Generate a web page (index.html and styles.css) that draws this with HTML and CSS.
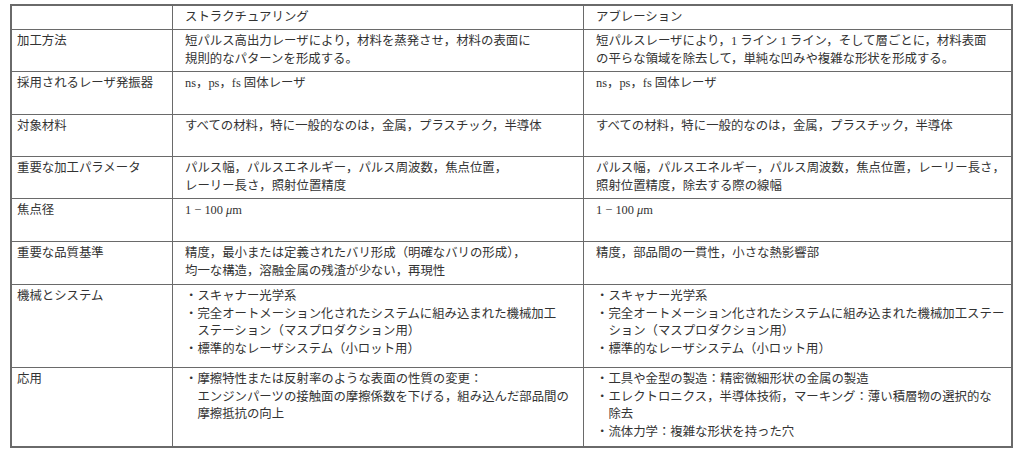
FILE: index.html
```html
<!DOCTYPE html>
<html lang="ja">
<head>
<meta charset="utf-8">
<title>ストラクチュアリングとアブレーション</title>
<link rel="stylesheet" href="styles.css">
</head>
<body>
<div class="table">
  <div class="cell label"></div>
  <div class="cell">ストラクチュアリング</div>
  <div class="cell">アブレーション</div>

  <div class="cell label">加工方法</div>
  <div class="cell">短パルス高出力レーザにより，材料を蒸発させ，材料の表面に<br>規則的なパターンを形成する。</div>
  <div class="cell">短パルスレーザにより，1 ライン 1 ライン，そして層ごとに，材料表面<br>の平らな領域を除去して，単純な凹みや複雑な形状を形成する。</div>

  <div class="cell label">採用されるレーザ発振器</div>
  <div class="cell">ns，ps，fs 固体レーザ</div>
  <div class="cell">ns，ps，fs 固体レーザ</div>

  <div class="cell label">対象材料</div>
  <div class="cell">すべての材料，特に一般的なのは，金属，プラスチック，半導体</div>
  <div class="cell">すべての材料，特に一般的なのは，金属，プラスチック，半導体</div>

  <div class="cell label">重要な加工パラメータ</div>
  <div class="cell">パルス幅，パルスエネルギー，パルス周波数，焦点位置，<br>レーリー長さ，照射位置精度</div>
  <div class="cell">パルス幅，パルスエネルギー，パルス周波数，焦点位置，レーリー長さ，<br>照射位置精度，除去する際の線幅</div>

  <div class="cell label">焦点径</div>
  <div class="cell">1 − 100 <i class="mu">μ</i>m</div>
  <div class="cell">1 − 100 <i class="mu">μ</i>m</div>

  <div class="cell label">重要な品質基準</div>
  <div class="cell">精度，最小または定義されたバリ形成（明確なバリの形成），<br>均一な構造，溶融金属の残渣が少ない，再現性</div>
  <div class="cell">精度，部品間の一貫性，小さな熱影響部</div>

  <div class="cell label">機械とシステム</div>
  <div class="cell">
    <ul class="bullets">
      <li>・スキャナー光学系</li>
      <li>・完全オートメーション化されたシステムに組み込まれた機械加工<br>ステーション（マスプロダクション用）</li>
      <li>・標準的なレーザシステム（小ロット用）</li>
    </ul>
  </div>
  <div class="cell">
    <ul class="bullets">
      <li>・スキャナー光学系</li>
      <li>・完全オートメーション化されたシステムに組み込まれた機械加工ステー<br>ション（マスプロダクション用）</li>
      <li>・標準的なレーザシステム（小ロット用）</li>
    </ul>
  </div>

  <div class="cell label">応用</div>
  <div class="cell">
    <ul class="bullets">
      <li>・摩擦特性または反射率のような表面の性質の変更：<br>エンジンパーツの接触面の摩擦係数を下げる，組み込んだ部品間の<br>摩擦抵抗の向上</li>
    </ul>
  </div>
  <div class="cell">
    <ul class="bullets">
      <li>・工具や金型の製造：精密微細形状の金属の製造</li>
      <li>・エレクトロニクス，半導体技術，マーキング：薄い積層物の選択的な<br>除去</li>
      <li>・流体力学：複雑な形状を持った穴</li>
    </ul>
  </div>
</div>
</body>
</html>
```

FILE: styles.css
```css
html, body {
  margin: 0;
  padding: 0;
  background: #ffffff;
}

body {
  font-family: "Liberation Serif", "Noto Sans CJK JP", serif;
  font-size: 12.4px;
  line-height: 17.6px;
  color: #333333;
}

.table {
  display: grid;
  grid-template-columns: 160px 410px 427px;
  grid-template-rows: 23px 41px 42px 41px 41px 42px 42px 82px 78px;
  gap: 1px;
  width: 999px;
  margin: 4px 0 0 10px;
  border: 2px solid #6a6a6a;
  background: #6a6a6a;
}

.cell {
  background: #ffffff;
  padding: 3px 0 0 12px;
  white-space: nowrap;
  overflow: hidden;
}

.cell.label {
  padding-left: 5px;
}

.mu {
  font-style: italic;
}

.bullets {
  list-style: none;
  margin: 0;
  padding: 0;
}

.bullets li {
  padding-left: 1em;
  text-indent: -1em;
}
```
